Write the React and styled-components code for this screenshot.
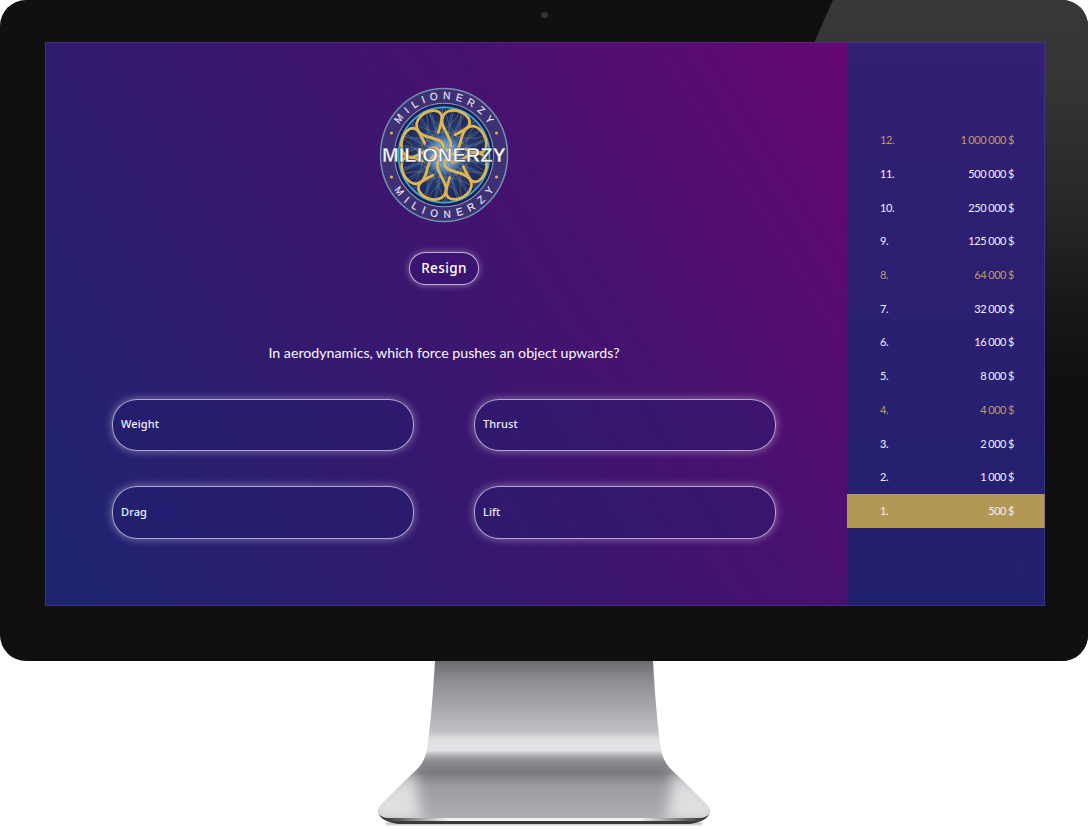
import React from "react";
import styled, { createGlobalStyle } from "styled-components";

const GlobalStyle = createGlobalStyle`
  html, body {
    margin: 0;
    padding: 0;
    background: #fff;
  }
  * {
    box-sizing: border-box;
  }
`;

const answers = ["Weight", "Thrust", "Drag", "Lift"];

const prizes = [
  { id: 12, amount: "1 000 000 $", milestone: true },
  { id: 11, amount: "500 000 $" },
  { id: 10, amount: "250 000 $" },
  { id: 9, amount: "125 000 $" },
  { id: 8, amount: "64 000 $", milestone: true },
  { id: 7, amount: "32 000 $" },
  { id: 6, amount: "16 000 $" },
  { id: 5, amount: "8 000 $" },
  { id: 4, amount: "4 000 $", milestone: true },
  { id: 3, amount: "2 000 $" },
  { id: 2, amount: "1 000 $" },
  { id: 1, amount: "500 $", current: true },
];

const spokes = Array.from({ length: 48 }, (_, i) => (i * 360) / 48);
const chords = Array.from({ length: 16 }, (_, i) => (i * 360) / 16);
const petals = [20, 65, 110, 155, 200, 245, 290, 335];

function Logo() {
  return (
    <LogoSvg viewBox="-130 -130 260 260" preserveAspectRatio="none">
      <defs>
        <radialGradient id="core">
          <stop offset="0" stopColor="#f0f6fa" />
          <stop offset="0.16" stopColor="#9dc0dc" />
          <stop offset="0.42" stopColor="#24407a" />
          <stop offset="1" stopColor="#1b1f52" />
        </radialGradient>
        <path id="arcTop" d="M -107 0 A 107 107 0 0 1 107 0" />
        <path id="arcBottom" d="M -120 0 A 120 120 0 0 0 120 0" />
      </defs>
      <circle r="127" fill="#3f2f74" stroke="#6f93ad" strokeWidth="3" />
      <circle r="99" fill="url(#core)" stroke="#8a9cc0" strokeWidth="2" />
      <circle r="91" fill="none" stroke="#38acd8" strokeWidth="3.5" />
      {spokes.map((deg, i) => (
        <line
          key={deg}
          x1="0"
          y1="0"
          x2={i % 2 ? 8 : -8}
          y2="-90"
          transform={`rotate(${deg})`}
          stroke={i % 2 ? "#4d8ccc" : "#3f74b4"}
          strokeWidth="1"
        />
      ))}
      {chords.map((deg) => (
        <path
          key={deg}
          d="M -62 -64 Q 0 -20 62 -64"
          transform={`rotate(${deg})`}
          fill="none"
          stroke="#a97f48"
          strokeWidth="0.9"
        />
      ))}
      {petals.map((deg) => (
        <path
          key={deg}
          d="M 2 -10 C 20 -30 -22 -42 -27 -62 C -32 -88 6 -96 23 -82 C 36 -68 18 -56 8 -44"
          transform={`rotate(${deg})`}
          fill="none"
          stroke="#e0b64e"
          strokeWidth="5.5"
          strokeLinecap="round"
        />
      ))}
      <RingText fontSize="20">
        <textPath href="#arcTop" startOffset="50%" textLength="212">
          MILIONERZY
        </textPath>
      </RingText>
      <RingText fontSize="20">
        <textPath href="#arcBottom" startOffset="50%" textLength="236">
          MILIONERZY
        </textPath>
      </RingText>
      <circle cx="-105" cy="-42" r="3" fill="#e2b64a" />
      <circle cx="105" cy="-42" r="3" fill="#e2b64a" />
      <circle cx="-105" cy="42" r="3" fill="#e2b64a" />
      <circle cx="105" cy="42" r="3" fill="#e2b64a" />
      <LogoTitle x="0" y="14" fontSize="37" textLength="248" lengthAdjust="spacingAndGlyphs">
        MILIONERZY
      </LogoTitle>
    </LogoSvg>
  );
}

function Stand() {
  const shape =
    "M57 0 L275 0 C277 35 280 70 283 88 C285 100 290 106 298 113 L329 144 C335 151 331 156 322 157 L10 157 C1 156 -3 151 3 144 L34 113 C42 106 47 100 49 88 C52 70 55 35 57 0 Z";
  return (
    <StandSvg viewBox="0 0 332 168">
      <defs>
        <linearGradient id="metal" x1="0" y1="0" x2="0" y2="1">
          <stop offset="0" stopColor="#6b6c70" />
          <stop offset="0.13" stopColor="#8e8f93" />
          <stop offset="0.29" stopColor="#a6a7aa" />
          <stop offset="0.45" stopColor="#c0c1c4" />
          <stop offset="0.5" stopColor="#dfe0e2" />
          <stop offset="0.57" stopColor="#e2e3e5" />
          <stop offset="0.6" stopColor="#b0b1b4" />
          <stop offset="0.64" stopColor="#8a8b8f" />
          <stop offset="0.71" stopColor="#797a7e" />
          <stop offset="0.8" stopColor="#9c9da0" />
          <stop offset="1" stopColor="#acadb0" />
        </linearGradient>
        <linearGradient id="lip" x1="0" y1="0" x2="1" y2="0">
          <stop offset="0" stopColor="#f4f4f5" stopOpacity="0" />
          <stop offset="0.2" stopColor="#f4f4f5" />
          <stop offset="0.8" stopColor="#f4f4f5" />
          <stop offset="1" stopColor="#f4f4f5" stopOpacity="0" />
        </linearGradient>
        <filter id="soft" x="-50%" y="-50%" width="200%" height="200%">
          <feGaussianBlur stdDeviation="7" />
        </filter>
        <filter id="shade" x="-10%" y="-100%" width="120%" height="300%">
          <feGaussianBlur stdDeviation="1.2" />
        </filter>
        <clipPath id="footClip">
          <path d={shape} />
        </clipPath>
      </defs>
      <rect x="8" y="161" width="316" height="3" fill="#000" opacity="0.25" filter="url(#shade)" />
      <path
        d="M2 147 C-3 155 6 161 20 163 L312 163 C326 161 335 155 330 147 Z"
        fill="#3a3a3c"
      />
      <path d={shape} fill="url(#metal)" />
      <g clipPath="url(#footClip)" opacity="0.8">
        <g filter="url(#soft)">
          <path d="M-10 160 L-10 140 L36 108 L44 160 Z" fill="#eeeef0" />
          <path d="M342 160 L342 140 L296 108 L288 160 Z" fill="#eeeef0" />
        </g>
      </g>
      <rect x="8" y="157" width="316" height="3" fill="url(#lip)" />
    </StandSvg>
  );
}

export default function App() {
  return (
    <Page>
      <GlobalStyle />
      <Bezel>
        <Glare />
        <Camera />
        <Screen>
          <Main>
            <Logo />
            <ResignButton>Resign</ResignButton>
            <Question>In aerodynamics, which force pushes an object upwards?</Question>
            <AnswerGrid>
              {answers.map((a) => (
                <Answer key={a}>{a}</Answer>
              ))}
            </AnswerGrid>
          </Main>
          <Sidebar>
            {prizes.map((p) => (
              <PrizeRow key={p.id} $milestone={p.milestone} $current={p.current}>
                <span>{p.id}.</span>
                <span>{p.amount}</span>
              </PrizeRow>
            ))}
          </Sidebar>
        </Screen>
      </Bezel>
      <Stand />
    </Page>
  );
}

const Page = styled.div`
  width: 1088px;
  height: 829px;
  display: flex;
  flex-direction: column;
  align-items: center;
  overflow: hidden;
  background: #fff;
`;

const Bezel = styled.div`
  position: relative;
  width: 1088px;
  height: 661px;
  flex: none;
  padding: 42px 43px 55px 45px;
  background: #101010;
  border-radius: 26px;
  overflow: hidden;
`;

const Glare = styled.div`
  position: absolute;
  inset: 0;
  clip-path: polygon(833px 0, 1088px 0, 1088px 661px, 540px 661px);
  background: linear-gradient(
    to bottom,
    #383838 0,
    #343434 90px,
    #272727 210px,
    #171717 310px,
    #101010 380px
  );
`;

const Camera = styled.div`
  position: absolute;
  top: 12px;
  left: 541px;
  width: 7px;
  height: 6px;
  border-radius: 50%;
  background: #343434;
`;

const Screen = styled.div`
  position: relative;
  display: flex;
  width: 1000px;
  height: 564px;
  outline: 1px solid rgba(90, 70, 160, 0.45);
  outline-offset: -1px;
`;

const Main = styled.main`
  width: 802px;
  flex: none;
  display: flex;
  flex-direction: column;
  align-items: center;
  padding: 45px 4px 0 0;
  background: linear-gradient(58deg, #1d2671 0%, #34196f 38%, #47126f 66%, #650773 100%);
`;

const LogoSvg = styled.svg`
  display: block;
  width: 130px;
  height: 136px;
  flex: none;
`;

const RingText = styled.text`
  font-family: "Liberation Sans", sans-serif;
  fill: #e6e9f2;
  stroke: #e6e9f2;
  stroke-width: 0.3;
  text-anchor: middle;
`;

const LogoTitle = styled.text`
  font-family: "Liberation Sans", sans-serif;
  font-weight: 700;
  fill: #f6f8fb;
  stroke: #20264e;
  stroke-width: 0.6;
  text-anchor: middle;
`;

const ResignButton = styled.button`
  width: 70px;
  height: 33px;
  margin-top: 29px;
  padding: 0 0 2px;
  border: 1px solid rgba(235, 225, 245, 0.75);
  border-radius: 17px;
  background: #3a1470;
  box-shadow: 0 0 7px rgba(255, 255, 255, 0.4);
  color: #fff;
  font: 500 13.5px "Noto Sans", sans-serif;
  letter-spacing: 0.4px;
`;

const Question = styled.p`
  margin: 57px 0 0;
  height: 22px;
  color: #fbf8fd;
  font: 400 14.2px/22px "Lato", sans-serif;
  text-align: center;
`;

const AnswerGrid = styled.div`
  display: grid;
  grid-template-columns: 302px 302px;
  grid-auto-rows: 52.5px;
  column-gap: 60px;
  row-gap: 35px;
  margin-top: 34.5px;
`;

const Answer = styled.div`
  display: flex;
  align-items: center;
  padding: 0 0 2px 8px;
  border: 1px solid rgba(225, 215, 240, 0.75);
  border-radius: 25px;
  background: rgba(32, 28, 110, 0.35);
  box-shadow: 0 0 8px rgba(255, 255, 255, 0.42);
  color: #f3eff8;
  font: 500 11px "Noto Sans", sans-serif;
  letter-spacing: 0.1px;
`;

const Sidebar = styled.aside`
  width: 198px;
  flex: none;
  display: flex;
  flex-direction: column;
  padding-top: 81px;
  background: linear-gradient(to bottom, #331f73, #21206f);
`;

const PrizeRow = styled.div`
  display: flex;
  align-items: center;
  justify-content: space-between;
  height: ${(p) => (p.$current ? "34.5px" : "33.7px")};
  flex: none;
  padding: 0 31px 0 33px;
  font: 400 11px "Lato", sans-serif;
  letter-spacing: -0.4px;
  word-spacing: -0.5px;
  color: ${(p) => (p.$milestone ? "#c49a5c" : "#f4f1fa")};
  background: ${(p) => (p.$current ? "#b39755" : "transparent")};
`;

const StandSvg = styled.svg`
  display: block;
  width: 332px;
  height: 168px;
  flex: none;
`;
